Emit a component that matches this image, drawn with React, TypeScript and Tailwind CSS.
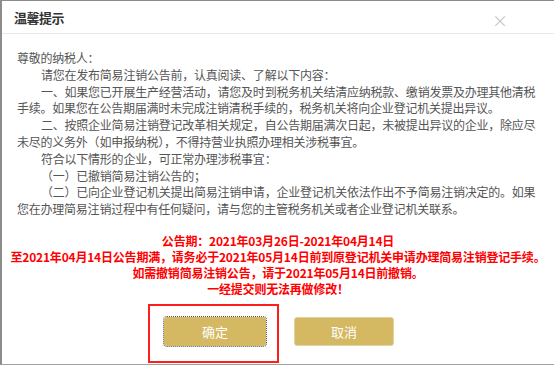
export default function App() {
  return (
    <div
      className="relative w-[554px] h-[365px] overflow-hidden bg-white border-t border-b border-l-2 border-t-[#8a8a8a] border-b-[#a0a0a0] border-l-[#8c8c8c]"
      style={{ fontFamily: '"Noto Sans CJK SC", "Liberation Sans", sans-serif' }}
    >
      {/* header */}
      <div className="flex items-center justify-between h-[33px] pl-[12px] pr-[46px] border-b border-[#e8e8e8]">
        <span className="text-[13px] font-semibold text-[#333] tracking-[-0.5px] mt-[2px]">温馨提示</span>
        <span className="text-[16px] leading-none text-[#c8c8c8] mt-[6px]">×</span>
      </div>

      {/* body */}
      <div className="pl-[15px] pr-[18px] pt-[16px] text-[12px] leading-[16.8px] text-[#555] tracking-[-0.23px]">
        <p>尊敬的纳税人：</p>
        <p className="indent-[24px]">请您在发布简易注销公告前，认真阅读、了解以下内容：</p>
        <p className="indent-[24px]">一、如果您已开展生产经营活动，请您及时到税务机关结清应纳税款、缴销发票及办理其他清税手续。如果您在公告期届满时未完成注销清税手续的，税务机关将向企业登记机关提出异议。</p>
        <p className="indent-[24px]">二、按照企业简易注销登记改革相关规定，自公告期届满次日起，未被提出异议的企业，除应尽未尽的义务外（如申报纳税），不得持营业执照办理相关涉税事宜。</p>
        <p className="indent-[24px]">符合以下情形的企业，可正常办理涉税事宜：</p>
        <p className="indent-[24px]">（一）已撤销简易注销公告的；</p>
        <p className="indent-[24px]">（二）已向企业登记机关提出简易注销申请，企业登记机关依法作出不予简易注销决定的。如果您在办理简易注销过程中有任何疑问，请与您的主管税务机关或者企业登记机关联系。</p>
      </div>

      {/* notice */}
      <div className="mt-[15px] flex flex-col items-center text-[12px] leading-[16px] font-bold text-[#ff0000] tracking-[-0.2px]">
        <p>公告期：2021年03月26日-2021年04月14日</p>
        <p>至2021年04月14日公告期满，请务必于2021年05月14日前到原登记机关申请办理简易注销登记手续。</p>
        <p>如需撤销简易注销公告，请于2021年05月14日前撤销。</p>
        <p>一经提交则无法再做修改！</p>
      </div>

      {/* actions */}
      <div className="mt-[20px] flex justify-center gap-[28px] pl-[2px]">
        <button className="w-[102px] h-[29px] rounded-[3px] bg-[#d4b862] text-white text-[13px] outline-1 outline-dotted outline-[#555] outline-offset-0">
          确定
        </button>
        <button className="w-[100px] h-[29px] rounded-[3px] bg-[#d4b862] text-white text-[13px] border border-[#e2d3a4]">
          取消
        </button>
      </div>

      {/* annotation box */}
      <div className="absolute left-[146px] top-[303px] w-[131px] h-[59px] border-2 border-[#ff1e1e]" />
    </div>
  );
}
